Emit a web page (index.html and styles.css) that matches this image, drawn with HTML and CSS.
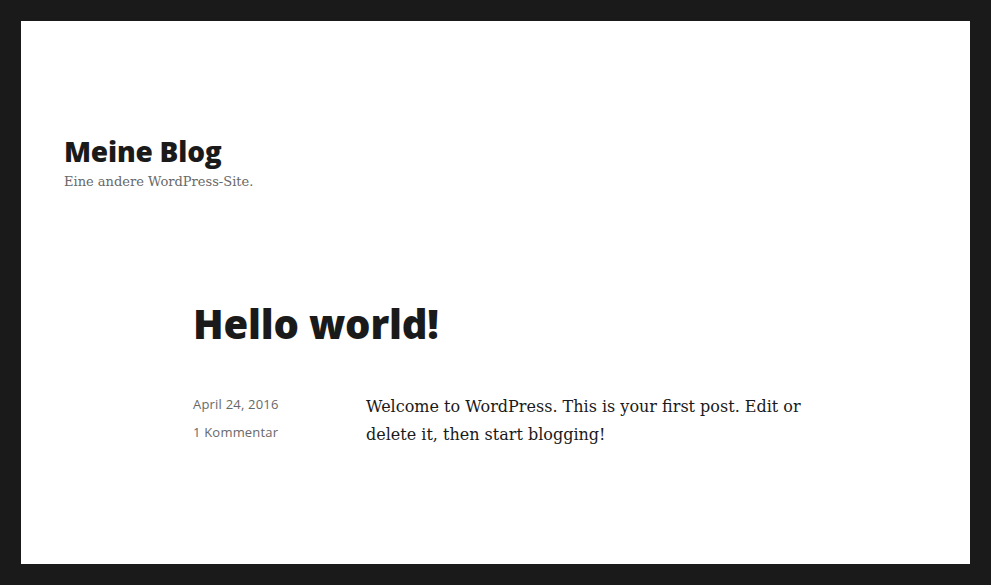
FILE: index.html
```html
<!DOCTYPE html>
<html lang="de">
<head>
<meta charset="utf-8">
<title>Meine Blog</title>
<link rel="stylesheet" href="styles.css">
</head>
<body>
<div class="page">
  <header class="site-header">
    <p class="site-title">Meine Blog</p>
    <p class="site-description">Eine andere WordPress-Site.</p>
  </header>
  <main class="site-main">
    <article class="post">
      <h1 class="entry-title">Hello world!</h1>
      <div class="entry-body">
        <footer class="entry-meta">
          <span class="meta-item">April 24, 2016</span>
          <span class="meta-item">1 Kommentar</span>
        </footer>
        <div class="entry-content">
          <p>Welcome to WordPress. This is your first post. Edit or delete it, then start blogging!</p>
        </div>
      </div>
    </article>
  </main>
</div>
</body>
</html>
```
FILE: styles.css
```css
html, body {
  margin: 0;
  padding: 0;
}
body {
  background: #1a1a1a;
  padding: 21px;
  height: 585px;
  box-sizing: border-box;
}
.page {
  background: #ffffff;
  height: 543px;
  box-sizing: border-box;
  padding: 0 43px;
}
.site-header {
  padding-top: 113px;
}
.site-title {
  margin: 0;
  font-family: "Open Sans", "DejaVu Sans", sans-serif;
  font-weight: 800;
  font-size: 28px;
  line-height: 35px;
  color: #1a1a1a;
  letter-spacing: -0.2px;
}
.site-description {
  margin: 4px 0 0;
  font-family: "DejaVu Serif", serif;
  font-size: 13px;
  line-height: 18px;
  color: #686868;
}
.site-main {
  padding-left: 129px;
  padding-top: 108px;
}
.entry-title {
  margin: 0;
  font-family: "Open Sans", "DejaVu Sans", sans-serif;
  font-weight: 800;
  font-size: 40px;
  line-height: 50px;
  color: #1a1a1a;
  letter-spacing: -0.2px;
}
.entry-body {
  display: flex;
  margin-top: 44px;
}
.entry-meta {
  width: 173px;
  flex: none;
  display: flex;
  flex-direction: column;
  gap: 10px;
  padding-top: 2px;
  font-family: "Open Sans", "DejaVu Sans", sans-serif;
  font-size: 13px;
  line-height: 18px;
  color: #686868;
  letter-spacing: 0.2px;
}
.entry-content {
  width: 436px;
}
.entry-content p {
  margin: 0;
  font-family: "DejaVu Serif", serif;
  font-size: 16px;
  line-height: 28px;
  color: #1a1a1a;
}
```
